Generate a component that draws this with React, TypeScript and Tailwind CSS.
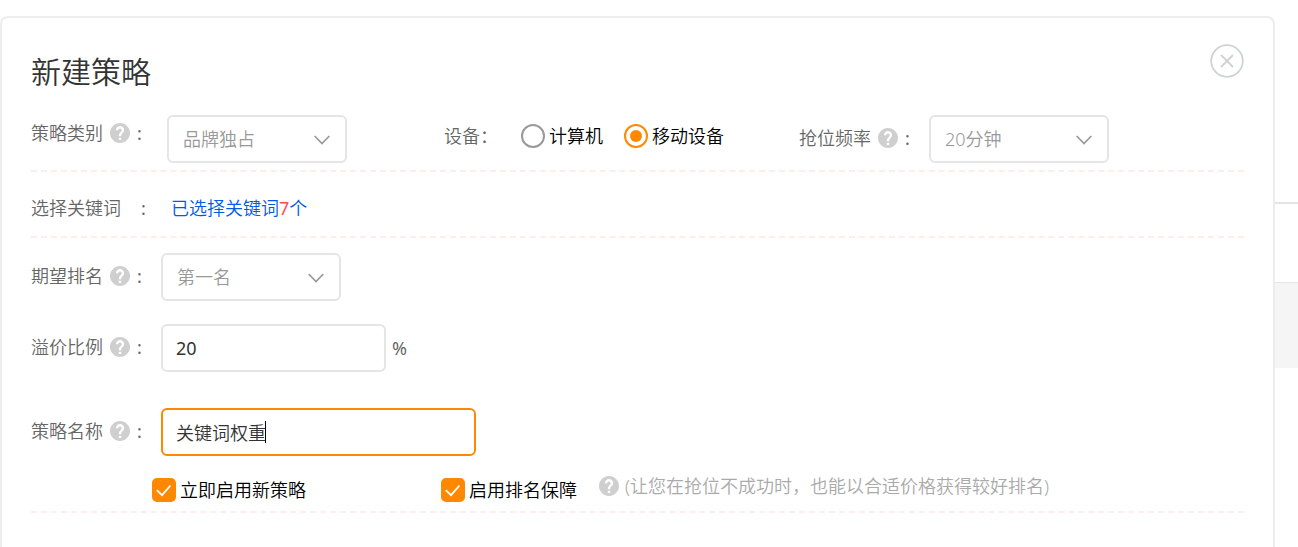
import { useState } from "react";
import type { ReactNode } from "react";

function HelpIcon() {
  return (
    <svg viewBox="2 2 20 20" className="size-5 shrink-0 fill-[#cfcfcf]" aria-hidden="true">
      <path d="M12 2C6.48 2 2 6.48 2 12s4.48 10 10 10 10-4.48 10-10S17.52 2 12 2zm1.2 17.1h-2.4v-2.4h2.4v2.4zm2.07-7.65l-.9.92C13.65 13.1 13.2 13.7 13.2 15.2h-2.4v-.7c0-1.1.45-2.1 1.17-2.83l1.24-1.26c.32-.32.49-.76.49-1.31 0-.95-.75-1.7-1.7-1.7s-1.7.75-1.7 1.8H7.9c0-2.31 1.79-4.2 4.1-4.2s4.2 1.79 4.2 4.1c0 .9-.36 1.78-.93 2.35z" />
    </svg>
  );
}

function FieldLabel({ htmlFor, children }: { htmlFor: string; children: ReactNode }) {
  return (
    <div className="flex h-[46px] w-[130px] shrink-0 items-center gap-[7px]">
      <label htmlFor={htmlFor}>{children}</label>
      <HelpIcon />
      <span className="font-normal">:</span>
    </div>
  );
}

function SelectBox({ id, options }: { id: string; options: string[] }) {
  return (
    <div className="relative w-[180px] shrink-0">
      <select
        id={id}
        className="block h-12 w-full appearance-none rounded-md border-2 border-[#e5e5e5] bg-white pr-10 pl-3.5 font-[350] text-[#999] outline-none"
      >
        {options.map((option) => (
          <option key={option}>{option}</option>
        ))}
      </select>
      <svg
        viewBox="0 0 16 10"
        className="pointer-events-none absolute top-5 right-[17px] h-2.5 w-4 fill-none stroke-[#999] stroke-[1.7]"
        aria-hidden="true"
      >
        <path d="M.7 1L8 8.6L15.3 1" />
      </svg>
    </div>
  );
}

function Radio({ label, checked, onChange }: { label: string; checked: boolean; onChange: () => void }) {
  return (
    <label className="flex items-center gap-1 text-black">
      <input
        type="radio"
        name="device"
        checked={checked}
        onChange={onChange}
        className="size-6 appearance-none rounded-full border-2 border-[#999] p-1 checked:border-[#ff8800] checked:bg-[#ff8800] checked:bg-clip-content"
      />
      {label}
    </label>
  );
}

function Checkbox({ label }: { label: string }) {
  return (
    <label className="flex items-center gap-1 text-black">
      <span className="relative size-6 shrink-0">
        <input
          type="checkbox"
          defaultChecked
          className="peer block size-6 appearance-none rounded-[5px] border-2 border-[#999] checked:border-[#ff8800] checked:bg-[#ff8800]"
        />
        <svg
          viewBox="0 0 24 24"
          className="pointer-events-none absolute inset-0 hidden size-6 fill-none stroke-white stroke-[1.8] peer-checked:block"
          aria-hidden="true"
        >
          <path d="M4.8 12.2l5.2 5L18.5 7.5" />
        </svg>
      </span>
      {label}
    </label>
  );
}

export default function App() {
  const [device, setDevice] = useState("移动设备");
  const [name, setName] = useState("关键词权重");

  return (
    <div className="flex min-h-screen bg-white font-['Noto_Sans','Noto_Sans_CJK_SC',sans-serif] text-lg leading-6 font-[350] text-[#666]">
      <main className="mt-4 min-w-0 flex-1 rounded-t-lg border-2 border-b-0 border-[#ededed] px-[29px] pt-[26px]">
        <header className="flex items-start justify-between">
          <h1 className="pt-2 text-[30px] leading-10 text-[#333]">新建策略</h1>
          <button type="button" aria-label="关闭" className="text-[#cfd2d4]">
            <svg viewBox="0 0 34 34" className="size-[34px] fill-none stroke-current stroke-[1.8]" aria-hidden="true">
              <circle cx="17" cy="17" r="15.8" />
              <path d="M11 11l12 12M23 11L11 23" />
            </svg>
          </button>
        </header>

        <form>
          <div className="mt-[18px] flex items-start border-b-2 border-dashed border-[#ffecec] pt-[5px] pb-[7px]">
            <div className="mr-1.5 -mt-[5px]">
              <FieldLabel htmlFor="category">策略类别</FieldLabel>
            </div>
            <SelectBox id="category" options={["品牌独占"]} />
            <fieldset className="ml-[97px] flex h-[42px] w-[355px] items-center">
              <legend className="float-left w-[77px]">设备：</legend>
              <div className="flex gap-[21px]">
                {["计算机", "移动设备"].map((label) => (
                  <Radio key={label} label={label} checked={device === label} onChange={() => setDevice(label)} />
                ))}
              </div>
            </fieldset>
            <FieldLabel htmlFor="frequency">抢位频率</FieldLabel>
            <SelectBox id="frequency" options={["20分钟"]} />
          </div>

          <div className="flex h-[66px] items-center border-b-2 border-dashed border-[#ffecec] pt-2">
            <span className="w-[110px]">选择关键词</span>
            <span className="w-[30px] font-normal">:</span>
            <a href="#keywords" className="text-[#0059e8]">
              已选择关键词<span className="font-normal text-[#ff4d4d]">7</span>个
            </a>
          </div>

          <div className="border-b-2 border-dashed border-[#ffecec] pt-[15px] pb-[9px]">
            <div className="flex items-start">
              <FieldLabel htmlFor="rank">期望排名</FieldLabel>
              <SelectBox id="rank" options={["第一名"]} />
            </div>
            <div className="mt-[23px] flex items-start">
              <FieldLabel htmlFor="premium">溢价比例</FieldLabel>
              <input
                id="premium"
                type="text"
                defaultValue="20"
                className="h-12 w-[225px] rounded-md border-2 border-[#e5e5e5] px-[13px] font-normal text-[#333] outline-none"
              />
              <span className="ml-1.5 self-center font-normal">%</span>
            </div>
            <div className="mt-9 flex items-start">
              <FieldLabel htmlFor="name">策略名称</FieldLabel>
              <div className="relative w-[315px]">
                <input
                  id="name"
                  type="text"
                  value={name}
                  onChange={(event) => setName(event.target.value)}
                  className="block h-12 w-full rounded-md border-2 border-[#ff8800] px-[13px] text-[#333] caret-transparent outline-none"
                />
                <span className="pointer-events-none absolute inset-y-0 left-3.5 flex items-center" aria-hidden="true">
                  <span className="invisible whitespace-pre">{name}</span>
                  <span className="h-[22px] w-px bg-black" />
                </span>
              </div>
            </div>
            <div className="mt-[22px] flex items-start pl-[121px]">
              <div className="w-[289px] shrink-0">
                <Checkbox label="立即启用新策略" />
              </div>
              <div className="w-[158px] shrink-0">
                <Checkbox label="启用排名保障" />
              </div>
              <div className="-mt-1 flex items-center gap-1.5 text-[#aaa]">
                <HelpIcon />
                <span>(让您在抢位不成功时，也能以合适价格获得较好排名)</span>
              </div>
            </div>
          </div>
        </form>
      </main>
      <aside className="w-[23px] shrink-0 pt-[202px]">
        <div className="h-20 border-t-2 border-[#e5e5e5]" />
        <div className="h-[86px] border-t border-[#e5e5e5] bg-[#f5f5f5]" />
      </aside>
    </div>
  );
}
